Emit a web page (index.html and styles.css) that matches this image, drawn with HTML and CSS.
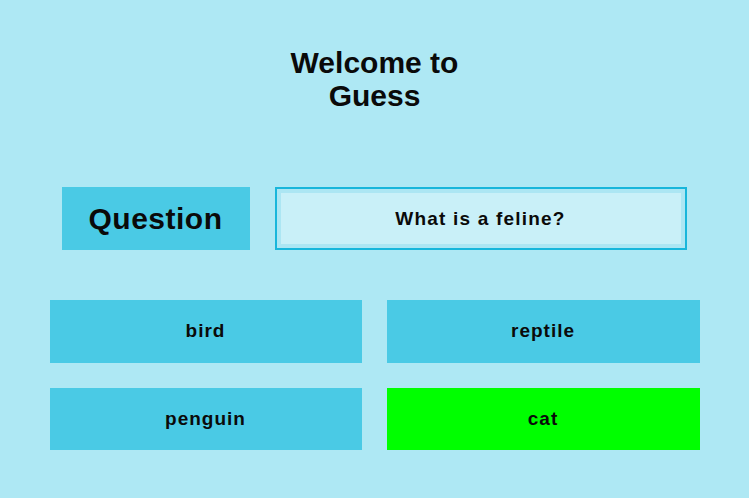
FILE: index.html
```html
<!DOCTYPE html>
<html>
<head>
<meta charset="utf-8">
<link rel="stylesheet" href="styles.css">
</head>
<body>
<div class="page">
  <h1 class="title">Welcome to<br>Guess</h1>
  <div class="question-row">
    <div class="question-label">Question</div>
    <div class="question-field">What is a feline?</div>
  </div>
  <div class="answers">
    <div class="answer">bird</div>
    <div class="answer">reptile</div>
    <div class="answer">penguin</div>
    <div class="answer correct">cat</div>
  </div>
</div>
</body>
</html>
```
FILE: styles.css
```css
html, body {
  margin: 0;
  padding: 0;
  background: #aee8f4;
}
body {
  width: 749px;
  height: 498px;
  overflow: hidden;
  font-family: "Liberation Sans", Arial, sans-serif;
  font-weight: bold;
  color: #0a0a0a;
}
.page {
  display: flex;
  flex-direction: column;
  align-items: center;
  padding-top: 46px;
}
.title {
  margin: 0;
  font-size: 30px;
  line-height: 33px;
  text-align: center;
  font-weight: bold;
  letter-spacing: 0;
}
.question-row {
  margin-top: 75px;
  display: flex;
  gap: 25px;
  margin-left: -1px;
}
.question-label {
  width: 188px;
  height: 63px;
  background: #4acae5;
  display: flex;
  align-items: center;
  justify-content: center;
  font-size: 30px;
  letter-spacing: 0.5px;
  padding-top: 1px;
  box-sizing: border-box;
}
.question-field {
  width: 412px;
  height: 63px;
  box-sizing: border-box;
  border: 2px solid #18b6db;
  box-shadow: inset 0 0 0 4px #ace6f3;
  background: #c9f0f8;
  display: flex;
  align-items: center;
  justify-content: center;
  font-size: 19px;
  letter-spacing: 1.2px;
}
.answers {
  margin-top: 50px;
  display: grid;
  grid-template-columns: 312px 313px;
  grid-auto-rows: 62.5px;
  column-gap: 25px;
  row-gap: 25px;
}
.answer {
  background: #4acae5;
  display: flex;
  align-items: center;
  justify-content: center;
  font-size: 19px;
  letter-spacing: 1px;
}
.answer.correct {
  background: #00ff00;
}
```
